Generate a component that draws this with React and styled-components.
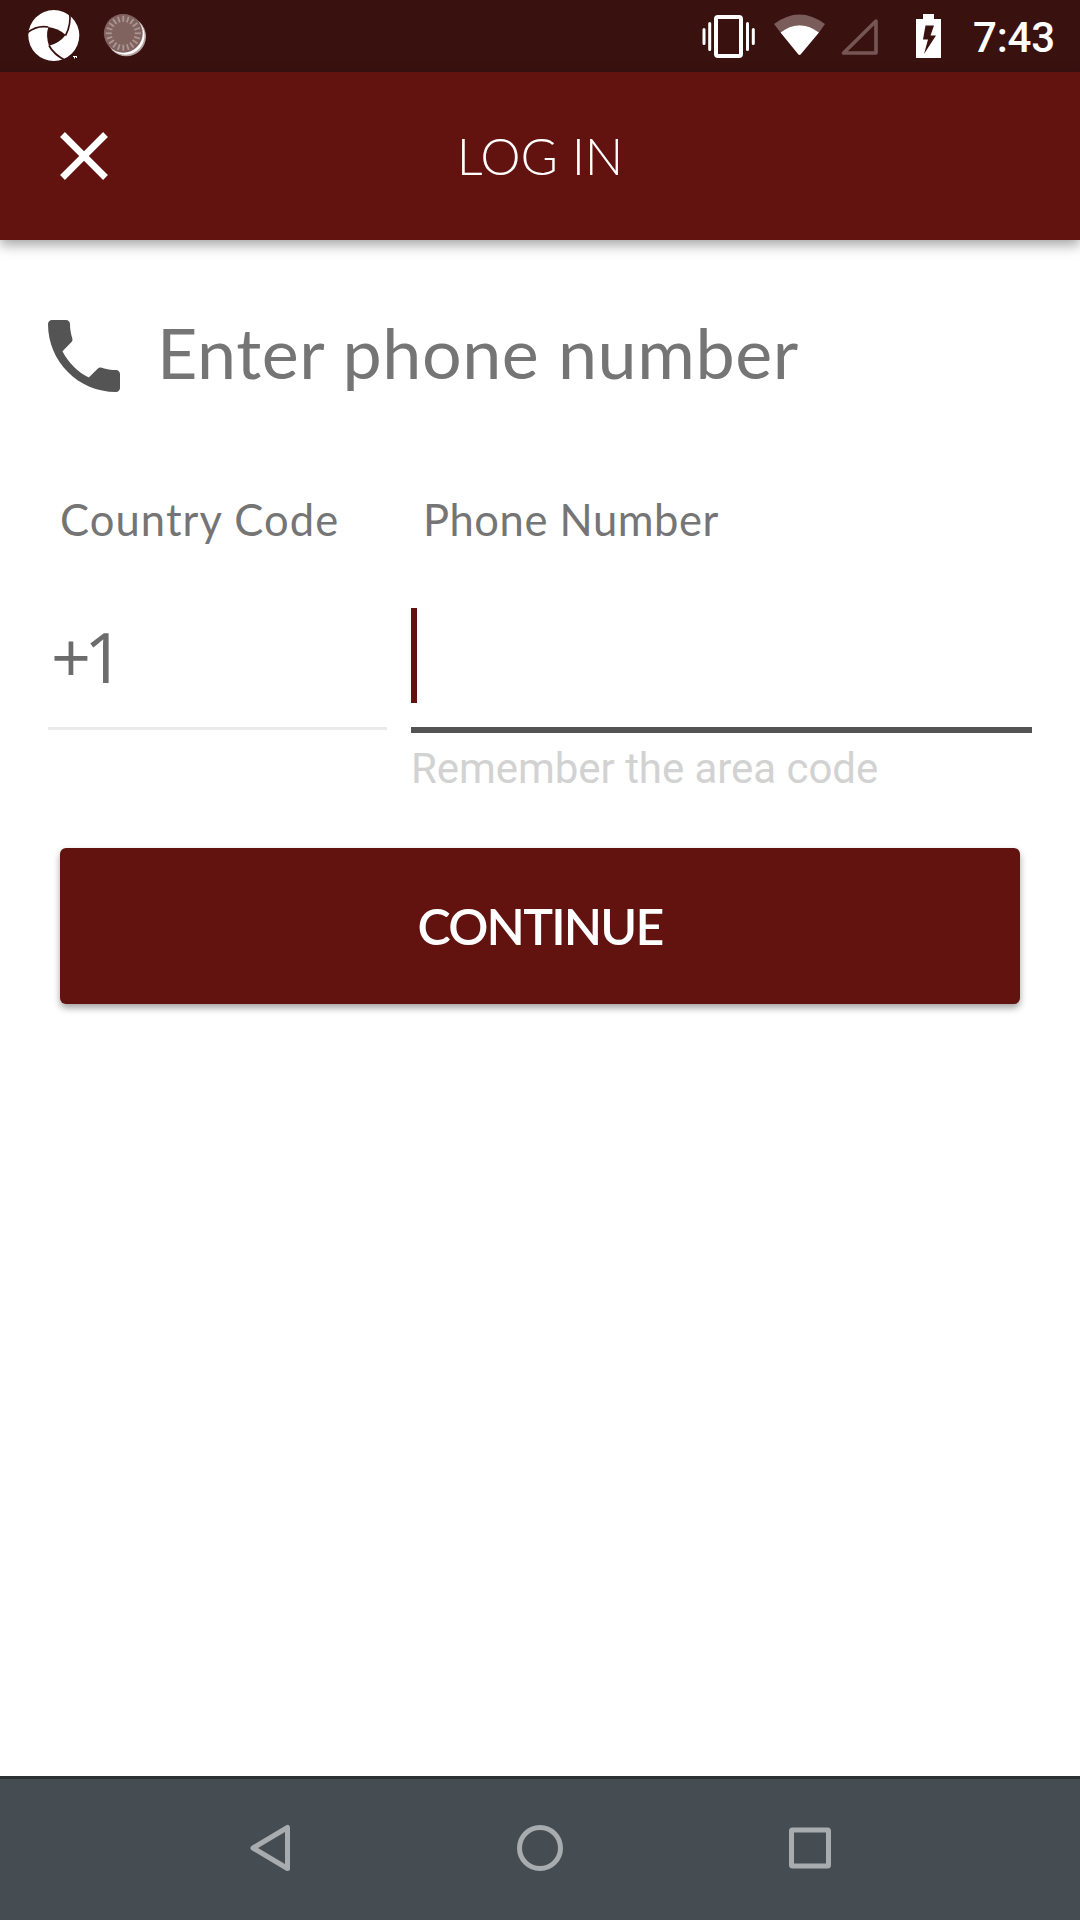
import React from "react";
import styled, { createGlobalStyle } from "styled-components";

const GlobalStyle = createGlobalStyle`
  * { box-sizing: border-box; }
  body { margin: 0; background: #fff; }
`;

const maroon = "#62130f";

const Screen = styled.div`
  width: 1080px;
  height: 1920px;
  display: flex;
  flex-direction: column;
  overflow: hidden;
  background: #fff;
  font-family: Lato, "Open Sans", sans-serif;
`;

const StatusBar = styled.header`
  height: 72px;
  flex: none;
  display: flex;
  justify-content: space-between;
  background: #39110f;
`;

const StatusGroup = styled.div`
  display: flex;
`;

const Clock = styled.span`
  width: 109px;
  padding-left: 2px;
  font: 500 42px/76px Roboto, sans-serif;
  letter-spacing: -0.2px;
  color: #fff;
`;

const AppBar = styled.div`
  height: 168px;
  flex: none;
  display: grid;
  grid-template-columns: 168px 1fr 168px;
  align-items: center;
  justify-items: center;
  background: ${maroon};
  box-shadow: 0 5px 12px rgba(0, 0, 0, 0.36);
`;

const IconButton = styled.button`
  display: flex;
  padding: 0;
  border: 0;
  background: none;
`;

const Title = styled.h1`
  margin: 0;
  font-size: 51px;
  font-weight: 300;
  line-height: 60px;
  letter-spacing: ${(p) => p.$spacing};
  white-space: nowrap;
  color: #fff;
`;

const Content = styled.main`
  flex: 1;
  display: flex;
  flex-direction: column;
`;

const Prompt = styled.div`
  display: flex;
  align-items: center;
  height: 96px;
  margin-top: 68px;
  padding-left: 36px;
`;

const PromptText = styled.h2`
  margin: 0;
  padding: 0 0 8px 25px;
  font-size: 70px;
  font-weight: 400;
  line-height: 84px;
  letter-spacing: ${(p) => p.$spacing};
  white-space: nowrap;
  color: #757575;
`;

const Fields = styled.div`
  display: grid;
  grid-template-columns: 339px 621px;
  column-gap: 24px;
  margin-top: 90px;
  padding-left: 48px;
  height: 354px;
`;

const Field = styled.label`
  display: flex;
  flex-direction: column;
`;

const FieldLabel = styled.span`
  height: 52px;
  padding-left: 12px;
  font-size: 43.5px;
  line-height: 50px;
  letter-spacing: ${(p) => p.$spacing};
  white-space: nowrap;
  color: #757575;
`;

const FieldValue = styled.div`
  height: ${(p) => (p.$active ? 187 : 184)}px;
  padding-top: 62px;
  padding-left: ${(p) => (p.$active ? 0 : 3)}px;
  border-bottom: ${(p) => (p.$active ? "6px solid #545454" : "3px solid #eaeaea")};
  font: 400 70px/96px "Open Sans", sans-serif;
  letter-spacing: -7px;
  color: #6c6c6c;
`;

const Caret = styled.div`
  width: 6px;
  height: 95px;
  background: ${maroon};
`;

const Hint = styled.span`
  padding-top: 11px;
  font: 400 42px/50px Roboto, sans-serif;
  letter-spacing: -0.05px;
  white-space: nowrap;
  color: #d2d2d2;
`;

const ContinueButton = styled.button`
  height: 156px;
  flex: none;
  margin: 0 60px;
  padding: 0 0 1px;
  border: 0;
  border-radius: 6px;
  background: ${maroon};
  box-shadow: 0 4px 7px rgba(0, 0, 0, 0.36);
  font-family: inherit;
  font-size: 50px;
  font-weight: 600;
  line-height: 60px;
  letter-spacing: ${(p) => p.$spacing};
  color: #fff;
`;

const NavBar = styled.nav`
  height: 144px;
  flex: none;
  display: flex;
  justify-content: center;
  border-top: 3px solid #2b3033;
  background: #454d52;
`;

const NavItem = styled.button`
  width: 270px;
  padding: 0;
  border: 0;
  background: none;
  svg { display: block; }
`;

const NotificationIcons = () => (
  <svg width="160" height="72" viewBox="0 0 160 72">
    <defs>
      <filter id="soft"><feGaussianBlur stdDeviation="0.6" /></filter>
    </defs>
    <circle cx="53.800" cy="35.500" r="25.500" fill="#fff" />
    <path fill="#39110f" d="M48.300 27Q58 28 65.700 35Q59.500 43 49 45.800Q45.500 36 48.300 27Z" />
    <path fill="none" stroke="#39110f" strokeWidth="1.700" d="M27.500 32.500Q37 25 48.300 27M69.500 11Q71.500 25 65.500 35.500M49 45.500Q53.500 54.500 66.500 61" />
    <path fill="#fff" d="M73 56h3v1h-1v1.500h-1V57h-1zM76 56h1v2h-1z" />
    <circle cx="126.800" cy="36.800" r="20" fill="#39110f" />
    <circle cx="126.300" cy="36.500" r="19.700" fill="#b5a5a4" filter="url(#soft)" />
    <circle cx="125.300" cy="35.500" r="19.200" fill="#fff" filter="url(#soft)" />
    <circle cx="123.300" cy="33.300" r="19.400" fill="#80625f" filter="url(#soft)" />
    {Array.from({ length: 20 }, (_, i) => (
      <path key={i} d="M123.300 15.800v6" stroke="#ab9694" strokeWidth="1.800" transform={`rotate(${i * 18} 123.300 33.300)`} />
    ))}
  </svg>
);

const SystemIcons = () => (
  <svg width="290" height="72" viewBox="681 0 290 72">
    <rect x="716" y="17" width="25" height="39" rx="2" fill="none" stroke="#fff" strokeWidth="4" />
    <path fill="none" stroke="#fff" strokeWidth="3" strokeLinecap="round" d="M704 29.500v14M709.700 23.500v26M747.500 23.500v26M753.300 29.500v14" />
    <path fill="#7a5c5a" d="M774 24Q799.500 5 825 24L819 32.500Q799.500 18 780.500 32.500Z" />
    <path fill="#fff" d="M780.500 32.500Q799.500 18 819 32.500L801 54Q799.500 56 798 54Z" />
    <path fill="none" stroke="#755654" strokeWidth="3.600" strokeLinejoin="round" d="M843.500 53h32.500V21Z" />
    <path fill="#fff" fillRule="evenodd" d="M923 14h11v5h7v39h-25V19h7zM925.500 25.500L923 39.500H928L924 54L936 35.500H930.500L934 25.500Z" />
  </svg>
);

const CloseIcon = () => (
  <svg width="82" height="82" viewBox="0 0 24 24" fill="#fff">
    <path d="M19 6.410L17.590 5 12 10.590 6.410 5 5 6.410 10.590 12 5 17.590 6.410 19 12 13.410 17.590 19 19 17.590 13.410 12z" />
  </svg>
);

const PhoneIcon = () => (
  <svg width="96" height="96" viewBox="0 0 24 24" fill="#545454">
    <path d="M6.620 10.790c1.440 2.830 3.760 5.140 6.590 6.590l2.200-2.200c.27-.27.67-.36 1.020-.24 1.120.37 2.330.57 3.570.57.55 0 1 .45 1 1V20c0 .55-.45 1-1 1-9.390 0-17-7.610-17-17 0-.55.45-1 1-1h3.500c.55 0 1 .45 1 1 0 1.250.2 2.450.57 3.570.11.35.03.74-.25 1.020l-2.200 2.200z" />
  </svg>
);

const NavIcon = ({ children }) => (
  <svg width="270" height="141" viewBox="0 0 270 141" fill="none" stroke="#a9acae" strokeWidth="5" strokeLinejoin="round">
    {children}
  </svg>
);

export default function App() {
  return (
    <>
      <GlobalStyle />
      <Screen>
        <StatusBar>
          <NotificationIcons />
          <StatusGroup>
            <SystemIcons />
            <Clock>7:43</Clock>
          </StatusGroup>
        </StatusBar>
        <AppBar>
          <IconButton aria-label="Close"><CloseIcon /></IconButton>
          <Title $spacing="-0.1px">LOG IN</Title>
        </AppBar>
        <Content>
          <Prompt>
            <PhoneIcon />
            <PromptText $spacing="0.6px">Enter phone number</PromptText>
          </Prompt>
          <Fields>
            <Field>
              <FieldLabel $spacing="1.1px">Country Code</FieldLabel>
              <FieldValue>+1</FieldValue>
            </Field>
            <Field>
              <FieldLabel $spacing="0.55px">Phone Number</FieldLabel>
              <FieldValue $active><Caret /></FieldValue>
              <Hint>Remember the area code</Hint>
            </Field>
          </Fields>
          <ContinueButton $spacing="-1.8px">CONTINUE</ContinueButton>
        </Content>
        <NavBar>
          <NavItem aria-label="Back">
            <NavIcon><path d="M118 69L152.500 48.500V89.500Z" /></NavIcon>
          </NavItem>
          <NavItem aria-label="Home">
            <NavIcon><circle cx="135" cy="69" r="20.500" /></NavIcon>
          </NavItem>
          <NavItem aria-label="Recent apps">
            <NavIcon><rect x="116.500" y="51" width="37" height="36" rx="1" /></NavIcon>
          </NavItem>
        </NavBar>
      </Screen>
    </>
  );
}
